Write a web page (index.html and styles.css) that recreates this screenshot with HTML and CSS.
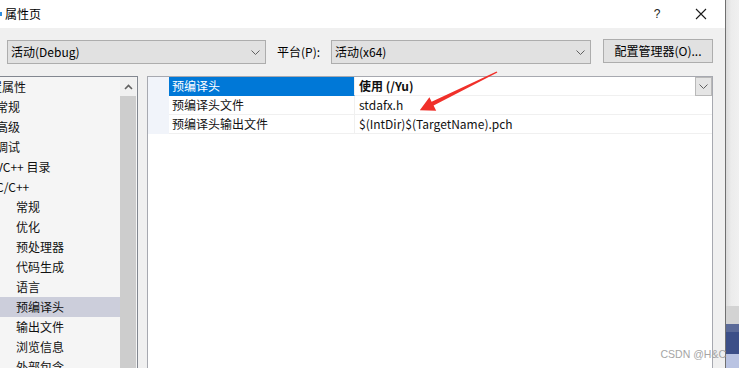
FILE: index.html
```html
<!DOCTYPE html>
<html lang="zh-CN">
<head>
<meta charset="utf-8">
<title>属性页</title>
<link rel="stylesheet" href="styles.css">
</head>
<body>
<div class="screen">
  <div class="dialog">
    <div class="titlebar">
      <span class="app-icon"></span>
      <span class="title">属性页</span>
      <span class="help">?</span>
      <span class="close">
        <svg width="12" height="12" viewBox="0 0 12 12"><path d="M1 1 L11 11 M11 1 L1 11" stroke="#1a1a1a" stroke-width="1.1" fill="none"/></svg>
      </span>
    </div>
    <div class="toolbar">
      <div class="combo combo-config">
        <span class="combo-text">活动(Debug)</span>
        <svg class="chev" width="9" height="5" viewBox="0 0 9 5"><path d="M0.5 0.5 L4.5 4.5 L8.5 0.5" stroke="#606060" stroke-width="1" fill="none"/></svg>
      </div>
      <span class="plat-label">平台(P):</span>
      <div class="combo combo-platform">
        <span class="combo-text">活动(x64)</span>
        <svg class="chev" width="9" height="5" viewBox="0 0 9 5"><path d="M0.5 0.5 L4.5 4.5 L8.5 0.5" stroke="#606060" stroke-width="1" fill="none"/></svg>
      </div>
      <button class="btn">配置管理器(O)...</button>
    </div>
    <div class="content">
      <div class="tree">
        <ul class="tree-list">
          <li class="lvl0">配置属性</li>
          <li class="lvl1">常规</li>
          <li class="lvl1">高级</li>
          <li class="lvl1">调试</li>
          <li class="lvl1">VC++ 目录</li>
          <li class="lvl1">C/C++</li>
          <li class="lvl2">常规</li>
          <li class="lvl2">优化</li>
          <li class="lvl2">预处理器</li>
          <li class="lvl2">代码生成</li>
          <li class="lvl2">语言</li>
          <li class="lvl2 sel">预编译头</li>
          <li class="lvl2">输出文件</li>
          <li class="lvl2">浏览信息</li>
          <li class="lvl2">外部包含</li>
        </ul>
        <div class="vscroll">
          <div class="vscroll-up">
            <svg width="9" height="6" viewBox="0 0 9 6"><path d="M1 5 L4.5 1.5 L8 5" stroke="#606060" stroke-width="1.6" fill="none"/></svg>
          </div>
          <div class="vscroll-thumb"></div>
        </div>
      </div>
      <div class="grid">
        <div class="grid-row">
          <span class="gutter"></span>
          <span class="name sel">预编译头</span>
          <span class="value bold">使用 (/Yu)
            <span class="drop">
              <svg width="9" height="5" viewBox="0 0 9 5"><path d="M0.5 0.5 L4.5 4.5 L8.5 0.5" stroke="#606060" stroke-width="1" fill="none"/></svg>
            </span>
          </span>
        </div>
        <div class="grid-row">
          <span class="gutter"></span>
          <span class="name">预编译头文件</span>
          <span class="value">stdafx.h</span>
        </div>
        <div class="grid-row">
          <span class="gutter"></span>
          <span class="name">预编译头输出文件</span>
          <span class="value">$(IntDir)$(TargetName).pch</span>
        </div>
      </div>
    </div>
  </div>
  <div class="outside">
    <div class="outside-fill"></div>
    <div class="band band-grey"></div>
    <div class="band band-mid"></div>
    <div class="band band-dark"></div>
    <div class="band band-light"></div>
  </div>
  <svg class="arrow" width="739" height="368" viewBox="0 0 739 368">
    <polygon points="497.4,72.6 433.6,105.6 436.2,110.8 419.8,110.2 429.4,97.2 431.6,101.8 496.6,71.4" fill="#f0302a"/>
  </svg>
  <div class="watermark">CSDN @H&amp;C</div>
</div>
</body>
</html>
```

FILE: styles.css
```css
* { box-sizing: border-box; }

html, body {
  margin: 0;
  padding: 0;
}

body {
  width: 739px;
  height: 368px;
  overflow: hidden;
  font-family: "Noto Sans CJK SC", "Noto Sans", sans-serif;
  font-size: 12px;
  color: #111;
}

.screen {
  position: relative;
  display: flex;
  width: 739px;
  height: 368px;
}

.dialog {
  width: 726px;
  height: 368px;
  border-right: 1px solid #707070;
  background: #f0f0f0;
  display: flex;
  flex-direction: column;
}

/* title bar */
.titlebar {
  height: 28px;
  background: #fff;
  display: flex;
  align-items: center;
  padding-right: 16px;
}

.app-icon {
  width: 2px;
  height: 4px;
  background: #2e8ee0;
  margin-right: 3px;
}

.title {
  font-size: 12px;
  line-height: 16px;
  color: #000;
}

.help {
  margin-left: auto;
  width: 16px;
  text-align: center;
  font-family: "Liberation Sans", sans-serif;
  font-size: 12px;
  line-height: 16px;
  color: #222;
}

.close {
  margin-left: 28px;
  width: 16px;
  height: 16px;
  display: flex;
  align-items: center;
  justify-content: center;
}

/* toolbar */
.toolbar {
  height: 48px;
  display: flex;
  align-items: flex-start;
  padding: 12px 0 0 7px;
}

.combo {
  height: 24px;
  border: 1px solid #adadad;
  background: #e1e1e1;
  display: flex;
  align-items: center;
  padding: 0 5px 0 3px;
}

.combo-text {
  line-height: 16px;
  color: #000;
}

.chev {
  margin-left: auto;
}

.combo-config { width: 259px; }

.plat-label {
  margin-left: 11px;
  width: 54px;
  height: 24px;
  line-height: 23px;
  color: #000;
}

.combo-platform { width: 260px; }

.btn {
  margin-left: 12px;
  margin-top: -1px;
  width: 110px;
  height: 24px;
  border: 1px solid #adadad;
  background: #e1e1e1;
  font-family: inherit;
  font-size: 12px;
  line-height: 16px;
  color: #000;
  padding: 0;
}

/* content */
.content {
  flex: 1;
  display: flex;
  min-height: 0;
}

.tree {
  width: 138px;
  border-top: 1px solid #828790;
  border-right: 1px solid #828790;
  background: #f5f5f5;
  display: flex;
  padding-right: 1px;
}

.tree-list {
  list-style: none;
  margin: 0;
  padding: 0;
  width: 120px;
  overflow: hidden;
}

.tree-list li {
  height: 20px;
  line-height: 20px;
  white-space: nowrap;
  color: #111;
}

.lvl0 { padding-left: 0; text-indent: -22px; }
.lvl1 { text-indent: -4px; }
.lvl2 { padding-left: 16px; }

.tree-list li.sel { background: #cccedb; }

.vscroll {
  width: 16px;
  display: flex;
  flex-direction: column;
}

.vscroll-up {
  height: 19px;
  background: #f0f0f0;
  display: flex;
  align-items: center;
  justify-content: center;
}

.vscroll-thumb {
  flex: 1;
  background: #cdcdcd;
}

.grid {
  width: 566px;
  margin-left: 9px;
  border: 1px solid #a7a9b0;
  border-bottom: none;
  background: #fff;
}

.grid-row {
  height: 19px;
  display: flex;
}

.gutter {
  width: 21px;
  background: #f1f4fa;
}

.name {
  width: 186px;
  padding-left: 3px;
  line-height: 18px;
  border-bottom: 1px solid #f0f0f0;
  border-right: 1px solid #f0f0f0;
  white-space: nowrap;
}

.name.sel {
  background: #0078d7;
  color: #fff;
  border-bottom-color: #0078d7;
}

.value {
  flex: 1;
  display: flex;
  padding-left: 4px;
  line-height: 18px;
  border-bottom: 1px solid #f0f0f0;
  white-space: nowrap;
}

.value.bold { font-weight: bold; }

.drop {
  margin-left: auto;
  width: 17px;
  height: 19px;
  border: 1px solid #b9b9b9;
  background: #e5e5e5;
  display: flex;
  align-items: center;
  justify-content: center;
}

/* outside window */
.outside {
  flex: 1;
  display: flex;
  flex-direction: column;
}

.outside-fill {
  flex: 1;
  background: linear-gradient(to right, #dcdcdc, #ececec 40%, #f0f0f0);
}

.band-grey { height: 18px; background: #d3d3d3; }
.band-mid { height: 8px; background: #5b6a98; }
.band-dark { height: 22px; background: #3c4f88; }
.band-light { height: 14px; background: #b9c3e2; }

/* overlays */
.arrow {
  position: absolute;
  left: 0;
  top: 0;
  pointer-events: none;
}

.watermark {
  position: absolute;
  right: 13px;
  bottom: 8px;
  font-family: "Liberation Sans", sans-serif;
  font-size: 10.5px;
  line-height: 12px;
  color: #a5a5a5;
}
```
